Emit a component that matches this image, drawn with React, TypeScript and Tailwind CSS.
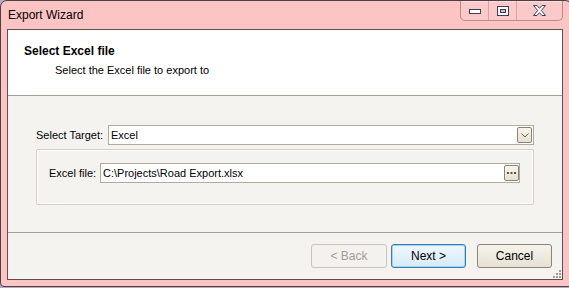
import React from "react";

const font = { fontFamily: '"Liberation Sans", Arial, sans-serif' };

const CaptionButtons = () => (
  <div className="absolute top-0 right-[8px] flex h-[20px] rounded-b-[5px] border border-t-0 border-[#b88a8a] bg-[#fcc9c9] shadow-[inset_0_1px_0_#ffdede]">
    <div className="flex w-[28px] items-center justify-center border-r border-[#d9a4a4]">
      <svg width="12" height="6" viewBox="0 0 12 6">
        <rect x="0.5" y="1.5" width="11" height="4" fill="#fff" stroke="#3b3f55" />
      </svg>
    </div>
    <div className="flex w-[28px] items-center justify-center border-r border-[#d9a4a4]">
      <svg width="12" height="10" viewBox="0 0 12 10">
        <rect x="0.5" y="0.5" width="11" height="9" fill="#fff" stroke="#3b3f55" />
        <rect x="3.5" y="3.5" width="5" height="3" fill="#e8b4b4" stroke="#3b3f55" />
      </svg>
    </div>
    <div className="flex w-[45px] items-center justify-center">
      <svg width="13" height="11" viewBox="0 0 13 11">
        <path
          d="M0.5 0.5h3.5l2.5 2.8 2.5-2.8h3.5l-4.2 5 4.2 5h-3.5l-2.5-2.8-2.5 2.8h-3.5l4.2-5z"
          fill="#fff"
          stroke="#3b3f55"
          strokeLinejoin="round"
        />
      </svg>
    </div>
  </div>
);

const SmallButton = ({ children }: { children: React.ReactNode }) => (
  <div className="flex h-[16px] w-[15px] items-center justify-center rounded-[2px] border border-[#8d8374] bg-gradient-to-b from-[#f8f5ee] to-[#e6e0d2]">
    {children}
  </div>
);

export default function App() {
  return (
    <div className="relative h-[288px] w-[569px] overflow-hidden bg-[#b9a7c4]" style={font}>
      <div className="relative flex h-[287px] w-[572px] flex-col rounded-t-[7px] rounded-b-[4px] border border-[#4d4040] bg-[#fdc4c4] pl-[6px] pr-[8px] pb-[6px]">
        <div className="flex h-[28px] items-center pl-[1px] text-[12px] text-black">Export Wizard</div>
        <CaptionButtons />

        <div className="flex flex-1 flex-col border border-[#5f5050] bg-[#f5f3ef] text-[11px] text-black">
          <div className="h-[66px] border-b border-[#a79f97] bg-white pl-[16px] pt-[14px]">
            <div className="text-[12px] font-bold leading-[15px]">Select Excel file</div>
            <div className="ml-[31px] mt-[4px] leading-[15px]">Select the Excel file to export to</div>
          </div>

          <div className="flex h-[137px] flex-col border-b border-[#a79f97] pl-[28px] pr-[28px] pt-[29px]">
            <div className="flex h-[20px] items-center">
              <div className="w-[72px]">Select Target:</div>
              <div className="flex h-[20px] flex-1 items-center border border-[#b3aa9f] bg-white pl-[2px] pr-[1px]">
                <span className="flex-1">Excel</span>
                <SmallButton>
                  <svg width="8" height="5" viewBox="0 0 8 5">
                    <path d="M0.5 0.5l3.5 3.5 3.5-3.5" fill="none" stroke="#6b5e4f" />
                  </svg>
                </SmallButton>
              </div>
            </div>

            <div className="mt-[4px] h-[56px] rounded-[2px] border border-[#d7cfc2] shadow-[inset_0_0_0_1px_#fff] px-[12px] pt-[13px]">
              <div className="flex h-[20px] items-center">
                <div className="w-[51px]">Excel file:</div>
                <div className="mr-[1px] flex h-[20px] flex-1 items-center border border-[#b3aa9f] bg-white pl-[2px]">
                  <span className="flex-1">C:\Projects\Road Export.xlsx</span>
                  <SmallButton>
                    <svg width="9" height="2" viewBox="0 0 9 2">
                      <g fill="#5c5145">
                        <rect x="0" y="0" width="2" height="2" />
                        <rect x="3.5" y="0" width="2" height="2" />
                        <rect x="7" y="0" width="2" height="2" />
                      </g>
                    </svg>
                  </SmallButton>
                </div>
              </div>
            </div>
          </div>

          <div className="relative flex flex-1 items-start justify-end gap-[4px] pr-[10px] pt-[11px] text-[12px]">
            <button className="flex h-[24px] w-[76px] items-center justify-center rounded-[3px] border border-[#cac5bd] bg-[#f4f2ee] text-[#a19d97]">
              &lt; Back
            </button>
            <button className="flex h-[24px] w-[75px] items-center justify-center rounded-[3px] border border-[#3d7bad] bg-gradient-to-b from-[#eef7fd] to-[#d7ebf8] shadow-[inset_0_0_0_1px_#9ed4f5]">
              Next &gt;
            </button>
            <button className="ml-[7px] flex h-[24px] w-[75px] items-center justify-center rounded-[3px] border border-[#8d8475] bg-gradient-to-b from-[#f6f3ec] to-[#e7e1d4]">
              Cancel
            </button>
            <svg className="absolute right-[1px] bottom-[1px]" width="8" height="8" viewBox="0 0 8 8">
              <g fill="#a59c90">
                <rect x="6" y="0" width="2" height="2" />
                <rect x="3" y="3" width="2" height="2" />
                <rect x="6" y="3" width="2" height="2" />
                <rect x="0" y="6" width="2" height="2" />
                <rect x="3" y="6" width="2" height="2" />
                <rect x="6" y="6" width="2" height="2" />
              </g>
            </svg>
          </div>
        </div>
      </div>
    </div>
  );
}
